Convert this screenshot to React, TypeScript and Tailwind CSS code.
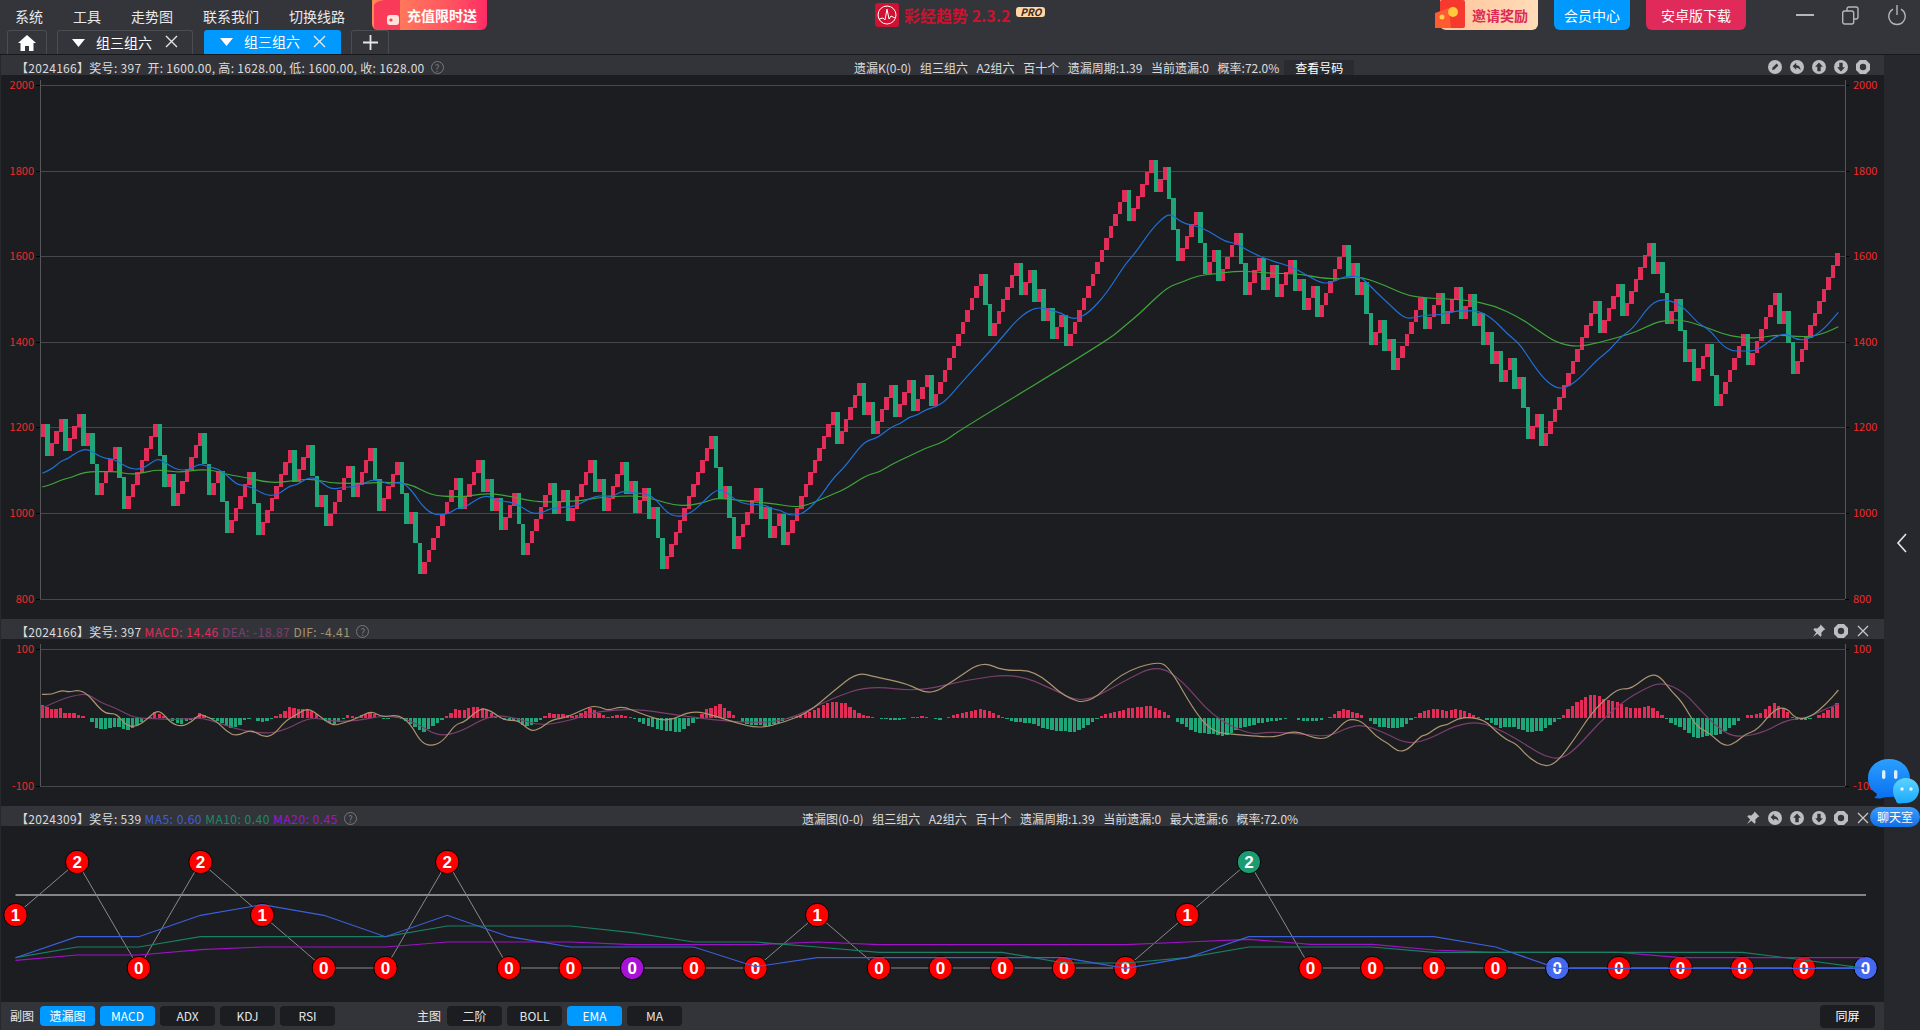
import type { ReactNode } from 'react'

// column runs of the main chart: positive = rising boxes, negative = falling boxes
const RUNS = [
  1, -1, 3, -1, 3, -1, 1, -2, 4, -2, 7, -2, 1, -1, 6, -2, 2, -2, 5, -2,
  7, -1, 3, -2, 1, -1, 5, -1, 4, -2, 4, -2, 1, -2, 8,
  -1, 4, -1, 1, -1, 1, -1, 3, -2, 6, -1, 2, -1, 5, -1, 1, -1, 4, -1, 1, -1, 2, -1, 1, -2, 11, -2, 1, -2, 5, -1, 1, -1, 2, -1, 11, -1, 5, -1, 1, -1, 4, -1, 3, -1, 3, -1, 11,
  -2, 6, -1, 2, -1, 1, -1, 1, -1, 2, -1, 13, -1, 5, -1, 2, -3, 4, -2, 2, -1, 4, -2, 3, -1, 2, -1, 3, -1, 1, -1, 2, -1, 6, -1, 1, -1, 1,
  -2, 2, -1, 1, -1, 6, -1, 3, -1, 3, -1, 2, -1, 1, -1, 1, -1, 1, -1, 2, -1, 1, -2, 2, -1, 12, -1, 4, -1, 6, -1, 1, -2, 2, -2, 1, -1, 3, -2, 6, -1, 6, -1, 1, -2, 10,
]

const COL_W = 4.486
const RED = '#e32c58'
const GREEN = '#1fa577'
const DOWN_STEP = 30.86

function buildBoxes() {
  const boxes: { x: number; y: number; h: number; up: boolean }[] = []
  let col = 0
  let top = 424.3
  let bottom = top + 12.67
  RUNS.forEach((run) => {
    const n = Math.abs(run)
    for (let k = 0; k < n; k++) {
      if (run > 0) {
        const t = k === 0 ? bottom - 12.67 : top - 12
        boxes.push({ x: 41 + col * COL_W, y: t, h: 12.67, up: true })
        top = t
      } else {
        const t = top + k * DOWN_STEP
        boxes.push({ x: 41 + col * COL_W, y: t, h: DOWN_STEP + 0.67, up: false })
        bottom = t + DOWN_STEP + 0.67
      }
      col++
    }
  })
  return boxes
}
const boxes = buildBoxes()

// traced points, given in crop coordinates
const crop = (x0: number, y0: number, a: number[], sx = 3, sy = 3) => {
  const out: [number, number][] = []
  for (let i = 0; i < a.length; i += 2) out.push([x0 + a[i] / sx, y0 + a[i + 1] / sy])
  return out
}

// midpoints joined by quadratic curves, so the traced lines stay round
const smooth = (p: [number, number][]) => {
  let d = `M${p[0][0].toFixed(1)} ${p[0][1].toFixed(1)}`
  for (let i = 1; i < p.length - 1; i++) {
    const mx = (p[i][0] + p[i + 1][0]) / 2
    const my = (p[i][1] + p[i + 1][1]) / 2
    d += `Q${p[i][0].toFixed(1)} ${p[i][1].toFixed(1)} ${mx.toFixed(1)} ${my.toFixed(1)}`
  }
  const last = p[p.length - 1]
  return `${d}L${last[0].toFixed(1)} ${last[1].toFixed(1)}`
}

const BLUE_LINE = smooth([
  ...crop(30, 380, [37,280,65,268,92,243,115,236,145,213,175,206,205,227,230,236,247,236,275,252,300,266,330,268,355,255,378,238,395,240,420,258,445,270,470,270,490,262,510,251,540,262,565,267,590,285,620,314,650,317,680,330,710,346,735,346,755,336,780,317,800,315,830,295,855,293,880,312,905,328,940,322,975,320,1000,310,1025,300,1050,302,1080,314,1105,305,1130,315,1155,345,1175,375,1200,398,1225,406,1260,400]),
  ...crop(440, 250, [48,775,75,773,115,744,145,737,175,752,215,757,245,770,270,788,300,792,330,775,375,772,410,768,450,744,485,736,520,740,545,722,580,730,620,730,650,750,680,788,710,800,740,795,770,775,800,745,830,718,860,725,885,750,920,763,975,765,1000,778,1020,780,1045,795,1075,795,1095,785,1130,755,1180,684,1215,650,1260,590,1285,570,1310,565,1355,530,1380,522,1410,500,1430,497,1460,477,1490,470,1520,450,1560,403]),
  ...crop(950, 130, [150,630,200,570,240,540,270,532,300,540,335,550,360,565,385,565,420,545,470,490,525,403,555,370,605,298,645,258,665,253,695,278,720,284,760,295,795,315,825,335,860,340,885,357,915,372,945,385,975,395,1025,410,1060,430,1110,458,1140,460,1190,437]),
  ...crop(1360, 220, [0,170,20,187,50,218,90,255,125,288,150,297,190,285,240,285,290,272,350,272,380,285,410,308,440,340,480,372,515,428,555,480,590,505,620,503,660,475,710,420,750,390,780,352,820,325,865,260,900,237,945,245,985,275,1010,307,1050,330,1085,375,1115,393,1145,393,1185,393,1215,375,1245,350,1280,340,1310,360,1345,358,1390,330,1435,277]),
])

const GREEN_LINE = smooth([
  ...crop(30, 380, [37,321,65,313,95,299,125,292,150,281,180,275,220,275,260,275,300,283,335,280,375,270,410,272,450,277,510,268,555,272,590,283,650,293,700,305,745,308,800,300,850,297,900,309,950,310,1000,310,1050,307,1110,308,1150,317,1190,338,1220,347,1260,350]),
  ...crop(440, 250, [75,740,120,732,160,731,215,740,260,750,300,756,370,755,420,752,470,744,540,738,600,738,650,750,700,765,750,767,800,755,830,744,890,750,940,755,1010,762,1060,771,1100,767,1180,732,1220,715,1260,688,1290,673,1320,665,1355,643,1410,617,1460,593,1500,580,1530,563,1560,540]),
  ...crop(950, 130, [475,630,525,587,570,550,605,515,655,470,700,455,745,436,800,431,860,423,920,426,960,430,1040,431,1090,440,1130,446,1180,445]),
  ...crop(1360, 220, [0,170,55,188,100,208,145,227,200,234,260,237,320,240,400,256,480,293,540,335,590,368,650,381,710,370,780,350,830,335,880,310,920,300,970,300,1040,322,1090,343,1140,352,1195,355,1250,344,1310,350,1355,350,1400,337,1435,320]),
])

const DIF_LINE = smooth([
  ...crop(0, 600, [103,283,125,285,150,270,170,277,192,269,215,283,240,320,260,342,285,340,310,378,335,380,360,358,380,335,395,335,420,370,445,380,470,365,490,342,505,350,530,362,555,395,580,409,615,388,645,412,670,405,700,362,725,345,755,323,785,350,815,377,840,370,875,355,910,332,935,352,975,344,1005,370,1030,425,1055,439,1085,425,1115,373,1140,365,1175,325,1200,330,1235,362,1270,360,1300,395,1325,385,1350,360,1390,352,1445,319,1470,320,1490,332,1525,318,1568,340], 2.45),
  ...crop(0, 0, [545,590,565,580,585,585,600,590,620,595,640,590,660,582,680,565,700,549,715,553,740,558,760,568,780,555,802,540,820,548,845,547,870,570,890,575,915,550,945,540,955,545,975,580,990,598,1010,600,1035,602], 0.8167, 0.8167),
  ...crop(1280, 600, [0,408,25,395,50,398,70,408,100,418,125,408,160,362,180,357,205,368,235,410,265,430,290,456,315,448,345,407,360,405,390,377,410,375,435,355,465,352,500,360,530,395,555,420,580,432,610,475,650,502,680,485,720,420,760,345,790,305,830,265,860,268,905,223,930,228,960,275,985,305,1020,380,1050,397,1090,442,1120,425,1140,402,1170,390,1210,328,1240,322,1265,358,1300,352,1340,310,1368,270], 2.45),
])

const DEA_LINE = smooth([
  ...crop(0, 600, [103,325,150,297,190,285,215,282,250,310,285,325,330,355,375,355,430,360,490,352,540,370,580,388,650,402,700,390,760,350,815,365,875,362,935,348,975,350,1020,370,1075,410,1130,395,1200,345,1260,352,1325,378,1400,360,1445,340,1500,330,1568,328], 2.45),
  ...crop(0, 0, [560,585,600,590,640,590,680,570,710,560,750,565,790,555,830,550,860,563,885,575,920,555,945,543,965,555,990,585,1020,600,1035,598], 0.8167, 0.8167),
  ...crop(1280, 600, [0,397,60,403,120,410,170,380,205,375,250,395,315,434,370,415,430,375,490,365,550,395,610,440,650,470,690,478,730,440,780,370,840,305,890,268,935,245,990,275,1040,345,1090,400,1130,412,1190,395,1240,360,1290,355,1340,325,1368,312], 2.45),
])

const HIST_KEYS: [number, number][] = [
  ...crop(0, 0, [99,44,110,36,120,30,131,26,148,30,160,14,185,14,205,4,215,0,225,-12,240,-34,270,-30,290,-25,305,-36,320,-34,335,-22,350,-8,365,0,380,18,395,10,410,2,425,-10,440,-20,455,-10,470,-4,480,6,490,16,505,6,520,-2,540,-12,565,-30,585,-24,600,-6,620,2,640,-14,660,-8,675,4,690,14,710,34,730,26,750,30,770,16,790,-4,815,-20,835,-10,850,8,875,4,895,12,910,20,930,0,950,-4,975,4,990,-6,1010,-20,1035,-44,1055,-30,1080,-8,1095,6,1115,26,1135,24,1160,34,1175,34,1195,24,1215,6,1235,-6,1260,-6,1285,-24,1305,-20,1325,-4,1345,14,1360,10,1380,12,1400,4,1425,16,1445,30,1470,14,1490,4,1520,10,1545,4], 2.45),
  ...crop(0, 0, [640,-5,660,-12,680,-14,695,-4,705,8,720,14,730,6,745,-6,770,-8,790,0,810,6,830,16,845,15,860,4,880,-1,900,-2,920,2,940,-2,960,5,980,9,995,5,1010,-3,1030,-5,1050,-12,1075,-14,1090,-6,1105,4,1130,10,1150,12,1165,6,1175,-2,1195,-14,1225,-18,1240,-10,1260,-5,1275,-3], 1, 1),
  ...crop(1280, 0, [0,-6,30,2,50,-8,90,-10,120,2,155,28,185,16,205,6,215,-2,240,-25,270,-30,295,-30,320,-8,330,2,345,18,385,28,410,22,430,26,460,18,490,2,510,-8,540,-30,570,-26,610,-44,640,-38,670,-14,690,4,705,26,730,50,760,68,775,70,795,55,825,50,850,32,880,30,905,36,925,20,940,4,955,-14,985,-30,1020,-62,1040,-54,1075,-50,1110,-22,1130,-2,1145,8,1175,14,1210,44,1235,30,1255,4,1270,-8,1300,-4,1325,10,1345,26,1365,44], 2.45),
]

function histAt(x: number) {
  for (let i = 1; i < HIST_KEYS.length; i++) {
    const [x1, y1] = HIST_KEYS[i]
    const [x0, y0] = HIST_KEYS[i - 1]
    if (x <= x1) return y0 + ((y1 - y0) * (x - x0)) / Math.max(x1 - x0, 0.01)
  }
  return HIST_KEYS[HIST_KEYS.length - 1][1]
}
const hist = Array.from({ length: 401 }, (_, i) => {
  const x = 41 + i * COL_W
  return { x, v: histAt(x + 1.6) }
})

// miss diagram
const NODE_VALUES = [1, 2, 0, 2, 1, 0, 0, 2, 0, 0, 0, 0, 0, 1, 0, 0, 0, 0, 0, 1, 2, 0, 0, 0, 0, 0, 0, 0, 0, 0, 0]
const NODE_Y = [968, 915, 862]
const nodeX = (i: number) => 15.5 + i * 61.67
const nodeColor = (i: number) => (i === 10 ? '#a812d6' : i === 20 ? '#1c9a72' : i === 25 || i === 30 ? '#4468f0' : '#ff0000')
const maLine = (a: number[]) => a.map((v, i) => `${nodeX(i).toFixed(1)},${(800 + v / 3).toFixed(1)}`).join(' ')
const MA5 = [473,410,410,346,314,346,410,346,410,441,441,441,500,473,473,473,473,473,505,473,410,410,410,410,441,505,505,505,505,505,505]
const MA10 = [473,441,441,410,410,410,410,378,378,378,398,426,426,441,457,457,457,489,489,473,441,441,441,457,457,457,457,457,457,480,505]
const MA20 = [481,465,465,449,441,441,441,426,426,426,434,434,434,426,434,434,434,434,434,426,418,433,433,450,457,457,457,473,473,473,473]

const MAIN_TICKS = [
  { y: 85, label: '2000' },
  { y: 171, label: '1800' },
  { y: 256, label: '1600' },
  { y: 342, label: '1400' },
  { y: 427, label: '1200' },
  { y: 513, label: '1000' },
  { y: 599, label: '800' },
]

function Yaxis({ top, bottom, ticks }: { top: number; bottom: number; ticks: { y: number; label: string }[] }) {
  return (
    <g>
      {ticks.map((t) => (
        <g key={t.y}>
          <line x1={40} x2={1845} y1={t.y + 0.5} y2={t.y + 0.5} stroke="#46474b" />
          <line x1={36} x2={40} y1={t.y + 0.5} y2={t.y + 0.5} stroke="#000" />
          <line x1={1845} x2={1849} y1={t.y + 0.5} y2={t.y + 0.5} stroke="#000" />
          <text x={34} y={t.y + 4} textAnchor="end" fontSize={11} fill="#ee2a2a">{t.label}</text>
          <text x={1853} y={t.y + 4} fontSize={11} fill="#ee2a2a">{t.label}</text>
        </g>
      ))}
      <line x1={40.5} x2={40.5} y1={top} y2={bottom} stroke="#55565a" />
      <line x1={1845.5} x2={1845.5} y1={top} y2={bottom} stroke="#55565a" />
    </g>
  )
}

function MainChart() {
  return (
    <svg className="block" width={1883} height={544} viewBox="1 75 1883 544">
      <Yaxis top={80} bottom={599} ticks={MAIN_TICKS} />
      <g shapeRendering="crispEdges">
        {boxes.map((b, i) => (
          <rect key={i} x={b.x} y={b.y} width={COL_W} height={b.h} fill={b.up ? RED : GREEN} />
        ))}
      </g>
      <path d={GREEN_LINE} fill="none" stroke="#3fa63a" strokeWidth={1.2} />
      <path d={BLUE_LINE} fill="none" stroke="#1f70d6" strokeWidth={1.2} />
    </svg>
  )
}

function MacdChart() {
  return (
    <svg className="block" width={1883} height={167} viewBox="1 639 1883 167">
      <Yaxis top={644} bottom={786} ticks={[{ y: 649, label: '100' }, { y: 786, label: '-100' }]} />
      <g shapeRendering="crispEdges">
        {hist.map((b) => (
          <rect key={b.x} x={b.x} y={b.v > 0 ? 718 - b.v : 718} width={3.3} height={Math.abs(b.v)} fill={b.v > 0 ? RED : GREEN} />
        ))}
      </g>
      <path d={DEA_LINE} fill="none" stroke="#7c3f6e" strokeWidth={1.2} />
      <path d={DIF_LINE} fill="none" stroke="#ab9570" strokeWidth={1.2} />
    </svg>
  )
}

function MissChart() {
  return (
    <svg className="block" width={1883} height={176} viewBox="1 826 1883 176">
      <line x1={15.5} x2={1866} y1={895} y2={895} stroke="#a9a9a9" strokeWidth={1.5} />
      <polyline points={NODE_VALUES.map((v, i) => `${nodeX(i)},${NODE_Y[v]}`).join(' ')} fill="none" stroke="#8a8a8a" />
      {NODE_VALUES.map((v, i) => (
        <g key={i}>
          <circle cx={nodeX(i)} cy={NODE_Y[v]} r={11.7} fill={nodeColor(i)} stroke="#000" />
          <text x={nodeX(i)} y={NODE_Y[v] + 6} textAnchor="middle" fontSize={17} fontWeight={700} fill="#fff" fontFamily="'Liberation Sans', sans-serif">{v}</text>
        </g>
      ))}
      <polyline points={maLine(MA20)} fill="none" stroke="#a012c8" strokeWidth={1.2} />
      <polyline points={maLine(MA10)} fill="none" stroke="#1a8065" strokeWidth={1.2} />
      <polyline points={maLine(MA5)} fill="none" stroke="#3c60dc" strokeWidth={1.2} />
    </svg>
  )
}

function CircleIcon({ children }: { children: ReactNode }) {
  return (
    <svg width={14} height={14} viewBox="0 0 14 14" className="shrink-0">
      <circle cx={7} cy={7} r={7} fill="#bcbec1" />
      {children}
    </svg>
  )
}
const EditIcon = () => (
  <CircleIcon>
    <path d="M4 10l.6-2.400 4-4 1.800 1.800-4 4z" fill="#34353a" />
  </CircleIcon>
)
const BackIcon = () => (
  <CircleIcon>
    <path d="M6.200 2.800L2.600 6.300l3.600 3.400V7.700c2 0 3.400.9 4.400 2.800 0-3.400-1.800-5.400-4.400-5.600z" fill="#34353a" />
  </CircleIcon>
)
const UpIcon = () => (
  <CircleIcon>
    <path d="M7 2.600l3.900 4.200H8.700v4.400H5.300V6.800H3.100z" fill="#34353a" />
  </CircleIcon>
)
const DownIcon = () => (
  <CircleIcon>
    <path d="M7 11.400L3.100 7.200h2.200V2.800h3.400v4.400h2.200z" fill="#34353a" />
  </CircleIcon>
)
const GearIcon = () => (
  <svg width={14} height={14} viewBox="0 0 14 14" className="shrink-0">
    <path d="M4 0h6l4 4v6l-4 4H4l-4-4V4z" fill="#bcbec1" />
    <circle cx={7} cy={7} r={3.200} fill="#34353a" />
  </svg>
)
const PinIcon = () => (
  <svg width={14} height={14} viewBox="0 0 14 14" className="shrink-0">
    <path d="M8.600 0.600l4.800 4.800-1.500.6-2.600 2.800.3 2.800-1.200 1.100-2.900-2.900L1 13l3.200-4.600-2.900-2.900 1.200-1.200 2.800.3L8 2.100z" fill="#bcbec1" />
  </svg>
)
const CloseIcon = () => (
  <svg width={14} height={14} viewBox="0 0 14 14" className="shrink-0">
    <path d="M2 2l10 10M12 2L2 12" stroke="#c4c6c8" strokeWidth={1.3} />
  </svg>
)
const QuestionIcon = () => (
  <span className="ml-[6px] flex h-[13px] w-[13px] shrink-0 items-center justify-center rounded-full border border-[#77787c] text-[10px] leading-none text-[#77787c]">?</span>
)

function CloseX() {
  return (
    <svg width={13} height={13} viewBox="0 0 13 13">
      <path d="M1 1l11 11M12 1L1 12" stroke="#e6e6e6" strokeWidth={1.4} />
    </svg>
  )
}

function Tab({ active, className }: { active?: boolean; className: string }) {
  return (
    <div className={`flex h-[24px] items-center rounded-t-[3px] ${active ? 'w-[137px] bg-[#0099ff] pl-[16px]' : 'w-[136px] border border-b-0 border-[#4b4c50] pl-[14px]'} ${className}`}>
      <svg width={13} height={8} viewBox="0 0 13 8" className="shrink-0">
        <path d="M0 0h13L6.500 8z" fill="#fff" />
      </svg>
      <span className="mb-[2px] ml-[11px] w-[56px] shrink-0 text-[14px] leading-none text-white">组三组六</span>
      <span className="mb-[2px] ml-[13px]">
        <CloseX />
      </span>
    </div>
  )
}

function TopBar() {
  return (
    <header className="h-[55px] shrink-0 border-b border-[#17181b] bg-[#34353a]">
      <div className="flex h-[30px]">
        <nav className="ml-[15px] flex h-[32px] items-center gap-[30px] text-[14px] text-[#e9e9e9]">
          <span>系统</span>
          <span>工具</span>
          <span>走势图</span>
          <span>联系我们</span>
          <span>切换线路</span>
        </nav>
        <div className="relative ml-[27px] flex h-[30px] w-[115px] items-center rounded-b-md bg-gradient-to-r from-[#ff8a55] to-[#ff2a64]">
          <svg width={30} height={30} viewBox="0 0 30 30" className="absolute left-0 top-0">
            <path d="M2 6C2 3 6 1 12 0h16v30H5c-2 0-3-2-3-4z" fill="#f93b59" />
            <rect x={15} y={15} width={12} height={10} rx={3} fill="#ffe3da" />
            <circle cx={19} cy={20} r={1.600} fill="#f93b59" />
          </svg>
          <span className="relative ml-[35px] text-[14px] font-bold text-white">充值限时送</span>
        </div>
        <div className="ml-[388px] flex w-[171px] items-start pt-[3px]">
          <svg width={24} height={24} viewBox="0 0 24 24" className="shrink-0">
            <rect width={24} height={24} rx={3} fill="#cf1232" />
            <circle cx={12} cy={12} r={9} fill="none" stroke="#fff" strokeWidth={1} />
            <path d="M4 16l4-1 2 2 2-11 2 10 2-3 4 2" fill="none" stroke="#fff" strokeWidth={1} />
          </svg>
          <span className="ml-[5px] whitespace-nowrap text-[16px] font-bold leading-[24px] text-[#c8142f]">彩经趋势 2.3.2</span>
          <span className="ml-[6px] mt-[4px] flex h-[10px] w-[29px] items-center justify-center rounded-[3px] bg-[#ffd6a6] text-[10px] font-bold italic leading-none text-[#3a2a1a]">PRO</span>
        </div>
        <div className="relative ml-[389px] h-[30px] w-[103px]">
          <div className="ml-[5px] flex h-[30px] items-center rounded-b-md bg-gradient-to-r from-[#ffc49a] to-[#ffdcb8] pl-[32px]">
            <span className="w-[60px] whitespace-nowrap text-[14px] font-bold text-[#dd2a55]">邀请奖励</span>
          </div>
          <svg width={30} height={30} viewBox="0 0 30 30" className="absolute left-0 top-0">
            <rect x={5} width={25} height={28} rx={2} fill="#f5392f" />
            <path d="M0 13l14-5 2 20H0z" fill="#ff5a30" />
            <circle cx={18} cy={12} r={5} fill="#ffc93c" />
            <circle cx={7} cy={17} r={2.500} fill="#ffd24d" />
          </svg>
        </div>
        <div className="ml-[16px] flex h-[30px] w-[76px] items-center justify-center rounded-b-md bg-[#0099ff] text-[14px] text-white">会员中心</div>
        <div className="ml-[16px] flex h-[30px] w-[100px] items-center justify-center rounded-b-md bg-[#e02b5a] text-[14px] text-white">安卓版下载</div>
        <div className="ml-[50px] flex h-[30px] items-center">
          <svg width={18} height={2}>
            <rect width={18} height={2} fill="#b5b6b8" />
          </svg>
        </div>
        <div className="ml-[28px] flex h-[30px] items-center">
          <svg width={17} height={19} viewBox="0 0 17 19" fill="none" stroke="#b5b6b8" strokeWidth={1.4}>
            <rect x={0.7} y={5} width={11} height={13} rx={2} />
            <path d="M5 5V3a2 2 0 012-2h7a2 2 0 012 2v8a2 2 0 01-2 2h-2.300" />
          </svg>
        </div>
        <div className="ml-[29px] flex h-[30px] items-center">
          <svg width={18} height={22} viewBox="0 0 18 22" fill="none" stroke="#b5b6b8" strokeWidth={1.4}>
            <path d="M5 5.200a8.200 8.200 0 108 0M9 1v10" />
          </svg>
        </div>
      </div>
      <div className="flex h-[24px] pl-[7px]">
        <div className="flex h-[24px] w-[40px] items-center justify-center rounded-t-[3px] border border-b-0 border-[#4b4c50]">
          <svg width={18} height={16} viewBox="0 0 18 16">
            <path d="M9 0L0 8h2.500v8h4.500v-5h4v5h4.500V8H18z" fill="#fff" />
          </svg>
        </div>
        <Tab className="ml-[10px]" />
        <Tab active className="ml-[11px]" />
        <div className="ml-[10px] flex h-[24px] w-[38px] items-center justify-center rounded-t-[3px] border border-b-0 border-[#4b4c50]">
          <svg width={15} height={15} viewBox="0 0 15 15">
            <path d="M7.500 0v15M0 7.500h15" stroke="#e6e6e6" strokeWidth={1.8} />
          </svg>
        </div>
      </div>
    </header>
  )
}

function PanelBar({ children }: { children: ReactNode }) {
  return <div className="flex h-[20px] shrink-0 items-center overflow-hidden bg-[#33343a] pt-[4px] pr-[14px] text-[12px] leading-none text-[#dcdcdc]">{children}</div>
}

function ChipButton({ label, active }: { label: string; active?: boolean }) {
  return (
    <div className={`flex h-[20px] w-[55px] items-center justify-center rounded-[4px] text-[12px] ${active ? 'bg-[#0099ff] text-white' : 'bg-[#1c1d21] text-[#e6e6e6]'}`}>{label}</div>
  )
}

function BottomBar() {
  return (
    <footer className="flex h-[28px] shrink-0 items-center bg-[#33343a] text-[12px] text-[#e6e6e6]">
      <span className="ml-[9px] w-[30px]">副图</span>
      <div className="flex gap-[5px]">
        <ChipButton label="遗漏图" active />
        <ChipButton label="MACD" active />
        <ChipButton label="ADX" />
        <ChipButton label="KDJ" />
        <ChipButton label="RSI" />
      </div>
      <span className="ml-[82px] w-[30px]">主图</span>
      <div className="flex gap-[5px]">
        <ChipButton label="二阶" />
        <ChipButton label="BOLL" />
        <ChipButton label="EMA" active />
        <ChipButton label="MA" />
      </div>
      <div className="ml-auto mr-[9px] flex h-[23px] w-[55px] items-center justify-center rounded-[4px] bg-[#1c1d21] text-white">同屏</div>
    </footer>
  )
}

export default function App() {
  return (
    <div className="relative flex h-[1030px] w-[1920px] flex-col overflow-hidden bg-[#27282d] font-['Noto_Sans_CJK_SC','Noto_Sans',sans-serif]">
      <TopBar />
      <div className="flex min-h-0 flex-1">
        <main className="ml-px flex w-[1883px] flex-col bg-[#1c1d21]">
          <PanelBar>
            <div className="flex w-[853px] shrink-0 items-center whitespace-pre pl-[15px] pt-px">
              <span className="tracking-[0.3px]">【2024166】奖号: 397  开: 1600.00, 高: 1628.00, 低: 1600.00, 收: 1628.00</span>
              <QuestionIcon />
            </div>
            <div className="flex gap-[8.6px] whitespace-nowrap pt-px">
              <span>遗漏K(0-0)</span>
              <span>组三组六</span>
              <span>A2组六</span>
              <span>百十个</span>
              <span>遗漏周期:1.39</span>
              <span>当前遗漏:0</span>
              <span>概率:72.0%</span>
            </div>
            <div className="ml-[5px] h-[15px] w-[70px] self-end bg-[#2a2b30] text-center text-[12px] leading-[16px] text-white">查看号码</div>
            <div className="ml-auto flex gap-[8px]">
              <EditIcon />
              <BackIcon />
              <UpIcon />
              <DownIcon />
              <GearIcon />
            </div>
          </PanelBar>
          <MainChart />
          <PanelBar>
            <div className="flex items-center whitespace-pre pl-[15px] pt-px">
              <span className="tracking-[0.3px]">【2024166】奖号: 397 </span>
              <span className="tracking-[0.5px] text-[#e12d58]">MACD: 14.46 </span>
              <span className="tracking-[0.5px] text-[#7b3f6c]">DEA: -18.87 </span>
              <span className="tracking-[0.5px] text-[#a8946e]">DIF: -4.41</span>
              <QuestionIcon />
            </div>
            <div className="ml-auto flex gap-[8px]">
              <PinIcon />
              <GearIcon />
              <CloseIcon />
            </div>
          </PanelBar>
          <MacdChart />
          <PanelBar>
            <div className="flex w-[801px] shrink-0 items-center whitespace-pre pl-[15px] pt-px">
              <span className="tracking-[0.3px]">【2024309】奖号: 539 </span>
              <span className="tracking-[0.5px] text-[#3f5fd8]">MA5: 0.60 </span>
              <span className="tracking-[0.5px] text-[#1b8a68]">MA10: 0.40 </span>
              <span className="tracking-[0.5px] text-[#a013d0]">MA20: 0.45</span>
              <QuestionIcon />
            </div>
            <div className="flex gap-[8.6px] whitespace-nowrap pt-px">
              <span>遗漏图(0-0)</span>
              <span>组三组六</span>
              <span>A2组六</span>
              <span>百十个</span>
              <span>遗漏周期:1.39</span>
              <span>当前遗漏:0</span>
              <span>最大遗漏:6</span>
              <span>概率:72.0%</span>
            </div>
            <div className="ml-auto flex gap-[8px]">
              <PinIcon />
              <BackIcon />
              <UpIcon />
              <DownIcon />
              <GearIcon />
              <CloseIcon />
            </div>
          </PanelBar>
          <MissChart />
          <BottomBar />
        </main>
        <aside className="flex flex-1 items-center justify-center">
          <svg width={12} height={20} viewBox="0 0 12 20" fill="none" stroke="#e6e6e6" strokeWidth={1.6}>
            <path d="M10 1L2 10l8 9" />
          </svg>
        </aside>
      </div>
      {/* floating chat room entry */}
      <div className="absolute left-[1866px] top-[758px] h-[70px] w-[54px]">
        <svg width={54} height={50} viewBox="0 0 54 50" className="block">
          <defs>
            <linearGradient id="chatA" x1="0" y1="0" x2="0" y2="1">
              <stop offset="0" stopColor="#2aa0ff" />
              <stop offset="1" stopColor="#0a6ff0" />
            </linearGradient>
            <linearGradient id="chatB" x1="0" y1="0" x2="0" y2="1">
              <stop offset="0" stopColor="#5cd4ff" />
              <stop offset="1" stopColor="#1aa8ff" />
            </linearGradient>
          </defs>
          <path d="M23 1c12 0 21 8 21 20s-7 18-21 18c-3 0-5 .5-7 1-2 .8-5 .8-8-.2 2-1 3-2 2.800-4C5 32 2 27 2 20 2 9 11 1 23 1z" fill="url(#chatA)" />
          <rect x={16} y={12} width={3.400} height={9} rx={1.700} fill="#d8efff" />
          <rect x={28} y={12} width={3.400} height={9} rx={1.700} fill="#d8efff" />
          <path d="M40 20c7 0 13 5 13 12s-6 13-13 13c-3 0-5 .5-7 .5s-3-2-3-3c-2-3-3-6-3-10.500 0-7 6-12 13-12z" fill="url(#chatB)" />
          <circle cx={36} cy={31} r={1.700} fill="#e6f7ff" />
          <circle cx={45} cy={31} r={1.700} fill="#e6f7ff" />
        </svg>
        <div className="absolute bottom-[1px] left-[4px] flex h-[20px] w-[50px] items-center justify-center rounded-full bg-gradient-to-b from-[#3a9cff] to-[#0f6fe6] text-[12px] text-white">聊天室</div>
      </div>
    </div>
  )
}
